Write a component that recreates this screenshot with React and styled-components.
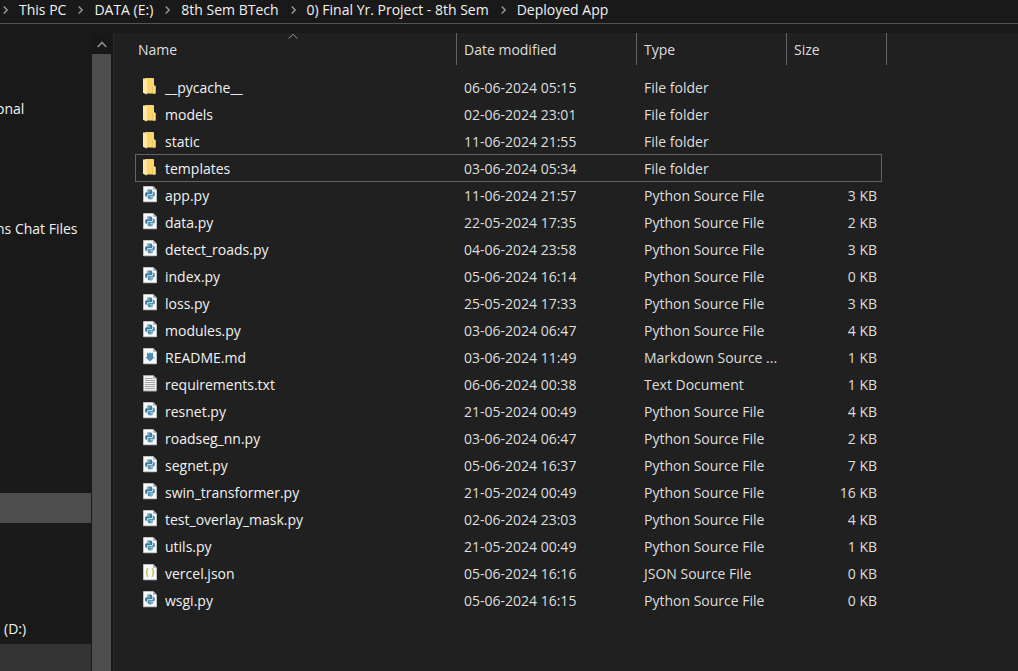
import React from "react";
import styled, { createGlobalStyle } from "styled-components";

const GlobalStyle = createGlobalStyle`
  *, *::before, *::after { box-sizing: border-box; }
  body {
    margin: 0;
    background: #191919;
    color: #f2f2f2;
    font: 14px/20px "Segoe UI", "Open Sans", "Noto Sans", sans-serif;
  }
  ul, ol { margin: 0; padding: 0; list-style: none; }
  a { color: inherit; text-decoration: none; }
  button { padding: 0; border: 0; background: none; color: inherit; font: inherit; }
`;

const Window = styled.div`
  display: flex;
  flex-direction: column;
  height: 100vh;
  overflow: hidden;
`;

const AddressBar = styled.nav`
  flex: none;
  height: 24px;
  border-bottom: 1px solid #535353;
`;

const Crumbs = styled.ol`
  display: flex;
`;

const Crumb = styled.li`
  display: flex;
  align-items: center;
  white-space: nowrap;
`;

const CrumbArrow = styled.svg`
  width: 5px;
  height: 8px;
  margin: 0 11px 0 12px;
  fill: none;
  stroke: #9a9a9a;
  stroke-width: 1.4;

  ${Crumb}:first-child & {
    margin-left: 3px;
  }
`;

const Body = styled.div`
  display: flex;
  flex: 1;
  min-height: 0;
`;

const Sidebar = styled.nav`
  flex: none;
  width: 91px;
  padding-top: 70px;
  overflow: hidden;
`;

const Group = styled.ul`
  margin-bottom: ${(p) => p.$gap}px;
`;

const Place = styled.li`
  height: 30px;
  background: ${(p) => p.$fill || "transparent"};
`;

const PlaceLink = styled.a`
  display: block;
  height: 30px;
  margin-left: ${(p) => (p.$cut ? "-4px" : "4px")};
  line-height: 30px;
  white-space: nowrap;
`;

const ScrollBar = styled.div`
  display: flex;
  flex: none;
  flex-direction: column;
  width: 19px;
  margin: 10px 2px 0 1px;
  background: #171717;
`;

const ScrollButton = styled.button`
  display: grid;
  place-items: center;
  height: 20px;
`;

const Thumb = styled.div`
  flex: 1;
  background: #4d4d4d;
`;

const Files = styled.main`
  flex: 1;
  min-width: 0;
  margin-top: 9px;
  padding-left: 16px;
  border-left: 1px solid #292929;
  background: #202020;
  color: #dedede;
  overflow: hidden;
`;

const Table = styled.table`
  display: block;
`;

const Head = styled.thead`
  display: block;
  margin-bottom: 8px;
`;

const HeadRow = styled.tr`
  display: grid;
  grid-template-columns: 327px 180px 150px 100px;
`;

const HeadCell = styled.th`
  position: relative;
  height: 32px;
  padding: 0 7px;
  border-right: 1px solid #636363;
  font-weight: 400;
  text-align: left;

  &:first-child {
    padding-left: 8px;
  }
`;

const SortButton = styled.button`
  width: 100%;
  height: 34px;
  text-align: left;
`;

const SortMark = styled.svg`
  position: absolute;
  top: 0;
  left: 50%;
  width: 10px;
  height: 6px;
  margin-left: -5px;
  fill: none;
  stroke: #9a9a9a;
`;

const Rows = styled.tbody`
  display: block;
`;

const Row = styled.tr`
  display: grid;
  grid-template-columns: 322px 180px 150px 95px;
  width: 747px;
  height: 28px;
  margin: 0 0 -1px 5px;
  box-shadow: ${(p) => (p.$focused ? "inset 0 0 0 1px #636363" : "none")};
`;

const Cell = styled.td`
  height: 28px;
  padding: 0 5px 0 7px;
  line-height: 30px;
  text-align: ${(p) => (p.$end ? "right" : "left")};
  white-space: nowrap;
  overflow: hidden;
  text-overflow: ellipsis;
`;

const NameCell = styled(Cell)`
  display: flex;
  gap: 8px;
  padding-left: 8px;
  color: #f2f2f2;
`;

const FileIcon = styled.svg`
  flex: none;
  width: 14px;
  height: 18px;
  margin-top: 4px;
`;

const FolderArt = () => (
  <>
    <path d="M1.500 1h8.500q1 0 1 1v6l1.500 1v7.500H1.500z" fill="#fbd56f" />
    <path d="M0 1.300 4 3v14.500L0 15.800z" fill="#ffe9a2" />
    <path d="M10 9h2.500v7.500H10z" fill="#ffdf85" />
    <path d="M9.800 9v7.500" stroke="#dfb348" strokeWidth=".6" />
  </>
);

const Page = () => (
  <>
    <path d="M.5 1.500h9.700l3.300 3.300v12H.5z" fill="#f8f9fa" stroke="#d5d8da" strokeWidth=".7" />
    <path d="M10.200 1.200v3.600h3.600z" fill="#a5a9ab" />
  </>
);

const PythonArt = () => (
  <>
    <Page />
    <path
      d="M4.500 4.500h3.200q1.600 0 1.600 1.500v2q0 1.300-1.400 1.300H5.300Q4 9.300 4 10.600v1.200H3.200Q2 11.800 2 9.400T3.600 7.200h3.600v-.5H4.300V5.600z"
      fill="#3b7d9f"
    />
    <path
      d="M9.900 6.700h.9q1.200 0 1.200 2.500t-1.500 2.400H7v.5h2.800v1.100q0 1.300-2.600 1.300t-2.600-1.400v-2.300Q4.600 9.900 5.900 9.900h2.700q1.300 0 1.300-1.300z"
      fill="#5595b3"
    />
    <path d="M5.300 5.600h.9M7.800 13.200h.9" stroke="#f8f9fa" strokeWidth=".8" />
  </>
);

const MarkdownArt = () => (
  <>
    <Page />
    <path d="m4 5.500 1.500 1L7 5.500l1.500 1 1.500-1v4.500h1.700L7 14.500 2.300 10H4z" fill="#4b8fb0" />
  </>
);

const TextArt = () => (
  <>
    <path d="M.5 1.500h10l3 3v12.500H.5z" fill="#f1f1f1" stroke="#a3a3a3" />
    <path d="M10.300 1.200v3.400h3.400z" fill="#999" />
    <path d="M2 4.500h7.500M2 6.500h10M2 8.500h10M2 10.500h10M2 12.500h10M2 14.500h10" stroke="#9b9b9b" strokeWidth=".9" />
  </>
);

const JsonArt = () => (
  <>
    <Page />
    <path
      d="M5.300 5.500Q4 5.500 4 7v1.200Q4 9.500 2.800 9.500 4 9.500 4 10.800V12q0 1.500 1.300 1.500M8.700 5.500Q10 5.500 10 7v1.200q0 1.300 1.200 1.300-1.200 0-1.200 1.300V12q0 1.500-1.300 1.500"
      fill="none"
      stroke="#b9b435"
      strokeWidth="1.200"
    />
  </>
);

const kinds = {
  folder: { label: "File folder", Art: FolderArt },
  python: { label: "Python Source File", Art: PythonArt },
  markdown: { label: "Markdown Source ...", Art: MarkdownArt },
  text: { label: "Text Document", Art: TextArt },
  json: { label: "JSON Source File", Art: JsonArt },
};

const files = [
  ["__pycache__", "06-06-2024 05:15", "folder", ""],
  ["models", "02-06-2024 23:01", "folder", ""],
  ["static", "11-06-2024 21:55", "folder", ""],
  ["templates", "03-06-2024 05:34", "folder", ""],
  ["app.py", "11-06-2024 21:57", "python", "3 KB"],
  ["data.py", "22-05-2024 17:35", "python", "2 KB"],
  ["detect_roads.py", "04-06-2024 23:58", "python", "3 KB"],
  ["index.py", "05-06-2024 16:14", "python", "0 KB"],
  ["loss.py", "25-05-2024 17:33", "python", "3 KB"],
  ["modules.py", "03-06-2024 06:47", "python", "4 KB"],
  ["README.md", "03-06-2024 11:49", "markdown", "1 KB"],
  ["requirements.txt", "06-06-2024 00:38", "text", "1 KB"],
  ["resnet.py", "21-05-2024 00:49", "python", "4 KB"],
  ["roadseg_nn.py", "03-06-2024 06:47", "python", "2 KB"],
  ["segnet.py", "05-06-2024 16:37", "python", "7 KB"],
  ["swin_transformer.py", "21-05-2024 00:49", "python", "16 KB"],
  ["test_overlay_mask.py", "02-06-2024 23:03", "python", "4 KB"],
  ["utils.py", "21-05-2024 00:49", "python", "1 KB"],
  ["vercel.json", "05-06-2024 16:16", "json", "0 KB"],
  ["wsgi.py", "05-06-2024 16:15", "python", "0 KB"],
];

const path = ["This PC", "DATA (E:)", "8th Sem BTech", "0) Final Yr. Project - 8th Sem", "Deployed App"];

const places = [
  { gap: 90, items: [{ text: "onal", cut: true }] },
  { gap: 249, items: [{ text: "ns Chat Files", cut: true }] },
  { gap: 91, items: [{ fill: "#4d4d4d" }] },
  { gap: 0, items: [{ text: "(D:)" }, { fill: "#333333" }] },
];

export default function App() {
  return (
    <>
      <GlobalStyle />
      <Window>
        <AddressBar>
          <Crumbs>
            {path.map((name) => (
              <Crumb key={name}>
                <CrumbArrow viewBox="0 0 5 8">
                  <path d="m.7.5 3.500 3.500L.7 7.500" />
                </CrumbArrow>
                <a href="#">{name}</a>
              </Crumb>
            ))}
          </Crumbs>
        </AddressBar>
        <Body>
          <Sidebar>
            {places.map((group, i) => (
              <Group key={i} $gap={group.gap}>
                {group.items.map((item, j) => (
                  <Place key={j} $fill={item.fill}>
                    {item.text && (
                      <PlaceLink href="#" $cut={item.cut}>
                        {item.text}
                      </PlaceLink>
                    )}
                  </Place>
                ))}
              </Group>
            ))}
          </Sidebar>
          <ScrollBar>
            <ScrollButton aria-label="Scroll up">
              <svg width="10" height="7" fill="none" stroke="#8a8a8a" strokeWidth="1.800">
                <path d="m.7 6 4.300-4.500L9.300 6" />
              </svg>
            </ScrollButton>
            <Thumb />
          </ScrollBar>
          <Files>
            <Table>
              <Head>
                <HeadRow>
                  {["Name", "Date modified", "Type", "Size"].map((label, i) => (
                    <HeadCell key={label} scope="col">
                      <SortButton>{label}</SortButton>
                      {i === 0 && (
                        <SortMark viewBox="0 0 10 6">
                          <path d="m.7 5.500L5 1.200l4.300 4.300" />
                        </SortMark>
                      )}
                    </HeadCell>
                  ))}
                </HeadRow>
              </Head>
              <Rows>
                {files.map(([name, date, kind, size]) => {
                  const { label, Art } = kinds[kind];
                  return (
                    <Row key={name} $focused={name === "templates"}>
                      <NameCell>
                        <FileIcon viewBox="0 0 14 18">
                          <Art />
                        </FileIcon>
                        {name}
                      </NameCell>
                      <Cell>{date}</Cell>
                      <Cell>{label}</Cell>
                      <Cell $end>{size}</Cell>
                    </Row>
                  );
                })}
              </Rows>
            </Table>
          </Files>
        </Body>
      </Window>
    </>
  );
}
